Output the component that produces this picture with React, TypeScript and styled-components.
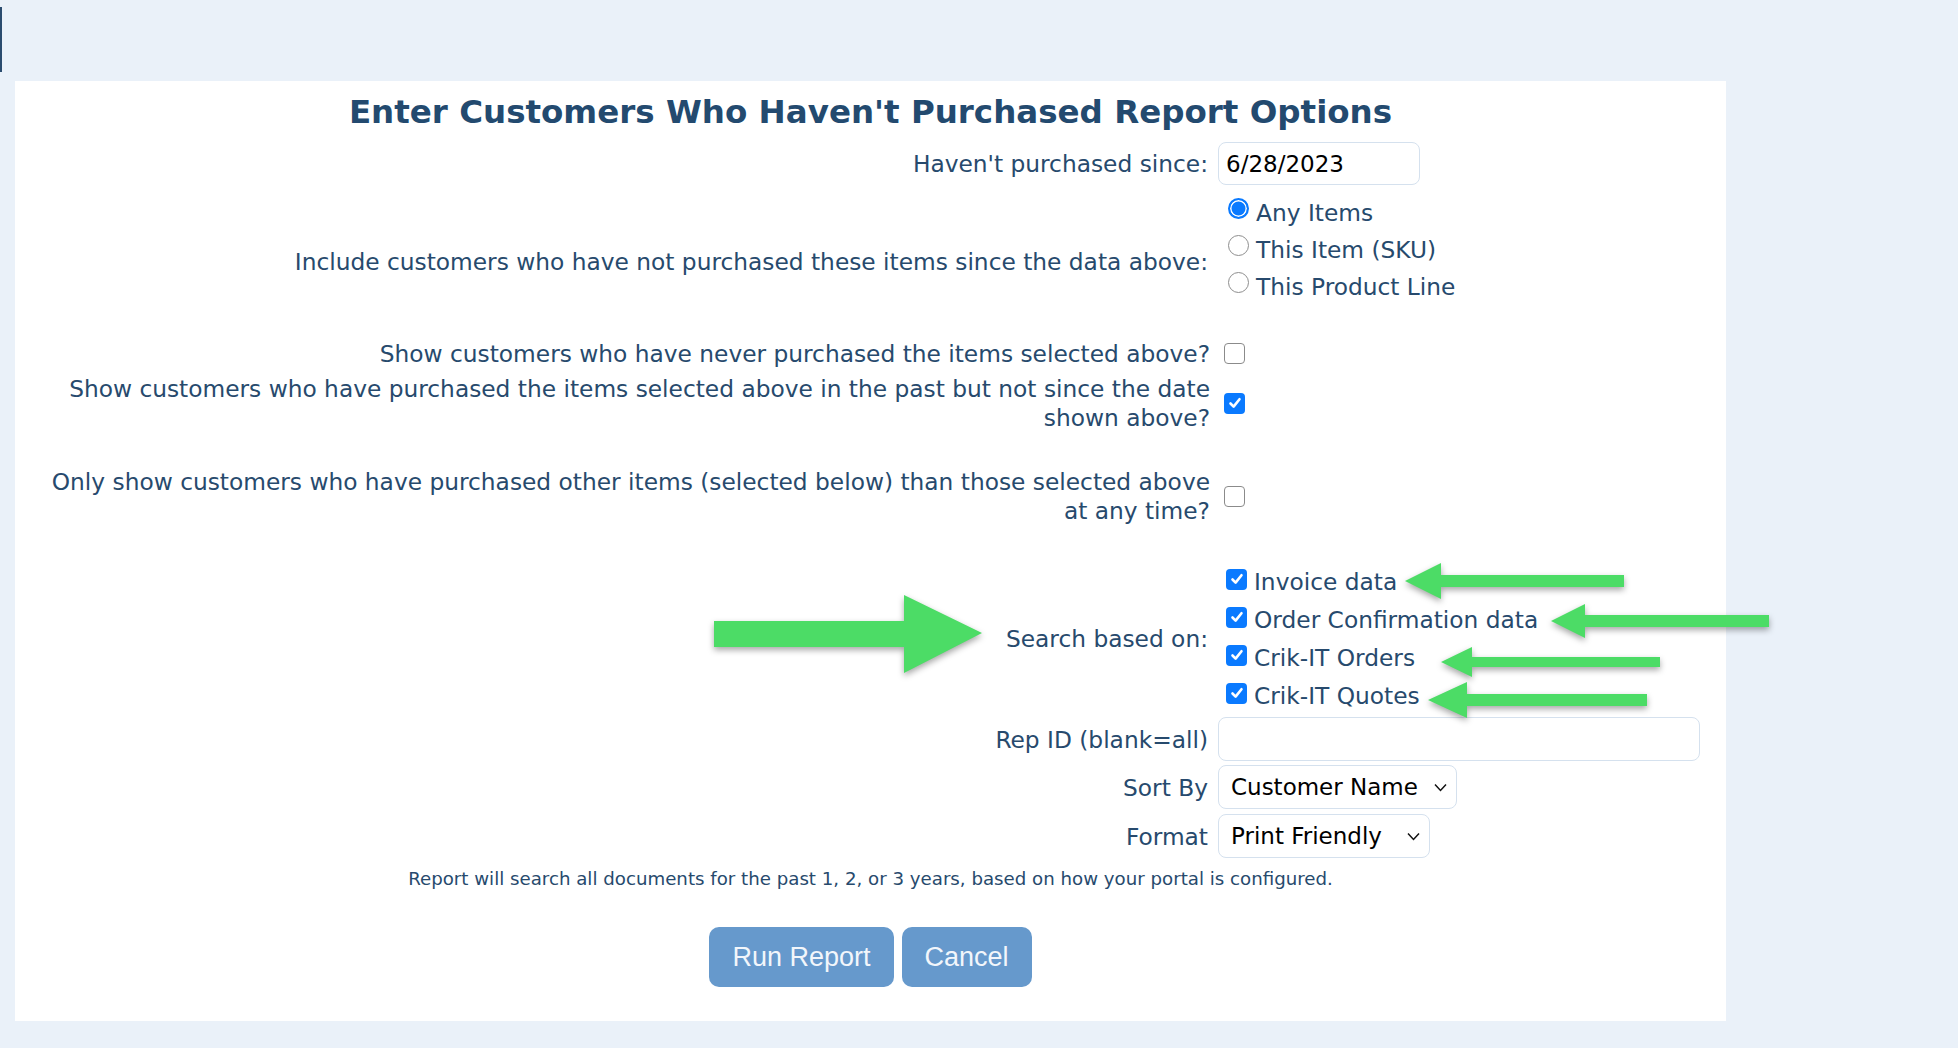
import React from 'react';
import styled, { createGlobalStyle } from 'styled-components';

const GlobalStyle = createGlobalStyle`
  html, body {
    margin: 0;
    padding: 0;
    background: #eaf1f9;
  }
  body {
    font-family: 'DejaVu Sans', Verdana, sans-serif;
  }
`;

const ink = '#274a6d';
const face = "'DejaVu Sans', Verdana, sans-serif";

const Page = styled.div`
  position: relative;
  width: 1958px;
  height: 1048px;
  overflow: hidden;
  background: #eaf1f9;
`;

const TopBar = styled.div`
  height: 81px;
  box-sizing: border-box;
  padding-top: 7px;
`;

const Caret = styled.div`
  width: 2px;
  height: 65px;
  background: #2b4c6f;
`;

const Panel = styled.div`
  margin-left: 15px;
  width: 1711px;
  box-sizing: border-box;
  padding: 11px 0 34px;
  background: #fff;
`;

const Title = styled.h1`
  margin: 0;
  text-align: center;
  font: 700 32.5px/40px ${face};
  color: #234a6f;
`;

const Row = styled.div<{ $gap: number }>`
  display: grid;
  grid-template-columns: 1185px 1fr;
  column-gap: 8px;
  align-items: center;
  padding-left: 10px;
  margin-top: ${({ $gap }) => $gap}px;
`;

const Label = styled.div<{ $flush?: boolean }>`
  text-align: right;
  white-space: nowrap;
  padding-right: ${({ $flush }) => ($flush ? 0 : 2)}px;
  font-size: 23.3px;
  line-height: 29px;
  color: ${ink};
`;

const Value = styled.div<{ $pad?: number }>`
  display: flex;
  flex-direction: column;
  align-items: flex-start;
  padding-bottom: ${({ $pad }) => $pad || 0}px;
`;

const TextInput = styled.input<{ $w: number; $h?: number }>`
  width: ${({ $w }) => $w}px;
  height: ${({ $h }) => $h || 44}px;
  box-sizing: border-box;
  border: 1px solid #d5e1ee;
  border-radius: 8px;
  padding: 0 7px;
  font: 23px ${face};
  color: #000;
  background: #fff;
  outline: none;
`;

const SelectBox = styled.div<{ $w: number }>`
  display: flex;
  align-items: center;
  width: ${({ $w }) => $w}px;
  height: 44px;
  box-sizing: border-box;
  border: 1px solid #d5e1ee;
  border-radius: 8px;
  padding: 0 9px 0 12px;
  background: #fff;
`;

const Select = styled.select`
  appearance: none;
  flex: 1;
  min-width: 0;
  border: none;
  background: transparent;
  padding: 0;
  font: 23px ${face};
  color: #000;
  outline: none;
`;

const Option = styled.label<{ $h: number }>`
  display: flex;
  align-items: center;
  gap: 7px;
  height: ${({ $h }) => $h}px;
  font-size: 23.3px;
  white-space: nowrap;
  color: ${ink};
`;

const Box = styled.span<{ $on?: boolean; $shift?: number; $left?: number }>`
  display: inline-flex;
  align-items: center;
  justify-content: center;
  flex: none;
  width: 21px;
  height: 21px;
  box-sizing: border-box;
  margin-left: ${({ $left }) => $left || 0}px;
  border-radius: 4px;
  border: ${({ $on }) => ($on ? 'none' : '1.5px solid #8b8b8b')};
  background: ${({ $on }) => ($on ? '#0a7aff' : '#fff')};
  transform: translateY(${({ $shift }) => $shift || 0}px);
`;

const Radio = styled.span<{ $on?: boolean }>`
  flex: none;
  width: 21px;
  height: 21px;
  box-sizing: border-box;
  margin-left: 10px;
  border-radius: 50%;
  border: ${({ $on }) => ($on ? '2px solid #0a7aff' : '1.5px solid #8e8e8e')};
  background: ${({ $on }) => ($on ? '#0a7aff' : '#fff')};
  box-shadow: ${({ $on }) => ($on ? 'inset 0 0 0 1.5px #fff' : 'none')};
  transform: translateY(-4px);
`;

const Note = styled.p`
  margin: 10px 0 0;
  text-align: center;
  font-size: 18.2px;
  line-height: 22px;
  color: ${ink};
`;

const Actions = styled.div`
  display: flex;
  justify-content: center;
  gap: 8px;
  margin-top: 37px;
`;

const Button = styled.button`
  height: 60px;
  padding: 0 23px;
  border: none;
  border-radius: 10px;
  background: #6699cc;
  color: #f2f6fb;
  font: 27px 'Liberation Sans', Arial, sans-serif;
  cursor: pointer;
`;

const Overlay = styled.svg`
  position: absolute;
  top: 0;
  left: 0;
  pointer-events: none;
  filter: drop-shadow(0 3px 3px rgba(0, 0, 0, 0.35));
`;

const Check = ({ on, shift, left }: { on?: boolean; shift?: number; left?: number }) => (
  <Box $on={on} $shift={shift} $left={left}>
    {on && (
      <svg width="14" height="14" viewBox="0 0 14 14">
        <path d="M2.5 7.5 L5.6 10.6 L11.5 3.2" fill="none" stroke="#fff" strokeWidth="2.6" strokeLinecap="round" strokeLinejoin="round" />
      </svg>
    )}
  </Box>
);

const Chevron = () => (
  <svg width="13" height="9" viewBox="0 0 13 9">
    <path d="M1 1.5 L6.5 7.5 L12 1.5" fill="none" stroke="#111" strokeWidth="1.5" />
  </svg>
);

// left-pointing callout arrow: tip x/y, back of head, shaft end
const leftArrow = (tip: number, y: number, back: number, end: number, head: number, half: number) =>
  `M${tip} ${y} L${back} ${y - head} L${back} ${y - half} L${end} ${y - half} L${end} ${y + half} L${back} ${y + half} L${back} ${y + head} Z`;

const sources = ['Invoice data', 'Order Confirmation data', 'Crik-IT Orders', 'Crik-IT Quotes'];

export default function App() {
  return (
    <Page>
      <GlobalStyle />
      <TopBar>
        <Caret />
      </TopBar>
      <Panel>
        <Title>Enter Customers Who Haven't Purchased Report Options</Title>

        <Row $gap={10}>
          <Label>Haven't purchased since:</Label>
          <Value>
            <TextInput $w={202} $h={43} defaultValue="6/28/2023" />
          </Value>
        </Row>

        <Row $gap={9}>
          <Label>Include customers who have not purchased these items since the data above:</Label>
          <Value $pad={23}>
            <Option $h={37}>
              <Radio $on />
              Any Items
            </Option>
            <Option $h={37}>
              <Radio />
              This Item (SKU)
            </Option>
            <Option $h={37}>
              <Radio />
              This Product Line
            </Option>
          </Value>
        </Row>

        <Row $gap={11}>
          <Label $flush>Show customers who have never purchased the items selected above?</Label>
          <Value>
            <Check left={6} />
          </Value>
        </Row>

        <Row $gap={6}>
          <Label $flush>
            Show customers who have purchased the items selected above in the past but not since the date
            <br />
            shown above?
          </Label>
          <Value>
            <Check on left={6} />
          </Value>
        </Row>

        <Row $gap={35}>
          <Label $flush>
            Only show customers who have purchased other items (selected below) than those selected above
            <br />
            at any time?
          </Label>
          <Value>
            <Check left={6} />
          </Value>
        </Row>

        <Row $gap={37}>
          <Label>Search based on:</Label>
          <Value>
            {sources.map(s => (
              <Option key={s} $h={38}>
                <Check on shift={-2} left={8} />
                {s}
              </Option>
            ))}
          </Value>
        </Row>

        <Row $gap={3}>
          <Label>Rep ID (blank=all)</Label>
          <Value>
            <TextInput $w={482} />
          </Value>
        </Row>

        <Row $gap={4}>
          <Label>Sort By</Label>
          <Value>
            <SelectBox $w={239}>
              <Select defaultValue="name">
                <option value="name">Customer Name</option>
                <option value="id">Customer ID</option>
              </Select>
              <Chevron />
            </SelectBox>
          </Value>
        </Row>

        <Row $gap={5}>
          <Label>Format</Label>
          <Value>
            <SelectBox $w={212}>
              <Select defaultValue="print">
                <option value="print">Print Friendly</option>
                <option value="excel">Excel</option>
              </Select>
              <Chevron />
            </SelectBox>
          </Value>
        </Row>

        <Note>Report will search all documents for the past 1, 2, or 3 years, based on how your portal is configured.</Note>

        <Actions>
          <Button>Run Report</Button>
          <Button>Cancel</Button>
        </Actions>
      </Panel>

      <Overlay width="1958" height="1048" viewBox="0 0 1958 1048">
        <g fill="#4cdc66">
          <path d="M714 621 L904 621 L904 595 L982 633 L904 673 L904 647 L714 647 Z" />
          <path d={leftArrow(1405, 581, 1441, 1624, 18, 6)} />
          <path d={leftArrow(1551, 621, 1585, 1769, 17, 6)} />
          <path d={leftArrow(1441, 662, 1472, 1660, 15, 5)} />
          <path d={leftArrow(1428, 700, 1467, 1647, 18, 6)} />
        </g>
      </Overlay>
    </Page>
  );
}
